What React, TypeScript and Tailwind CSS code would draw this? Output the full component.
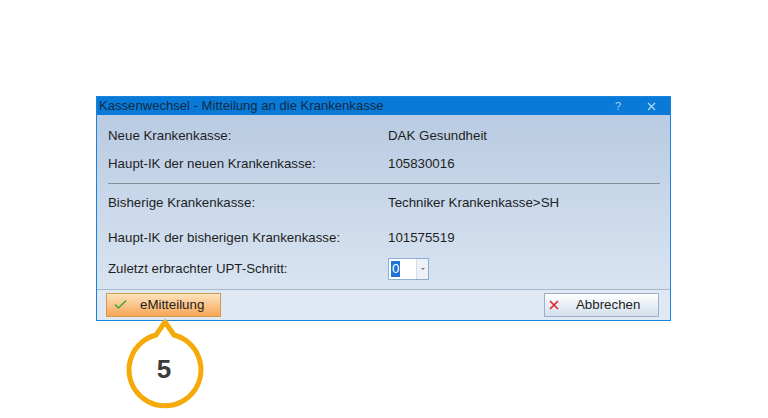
import React from "react"

function Row({ label, value, className = "" }: { label: string; value: React.ReactNode; className?: string }) {
  return (
    <div className={`flex items-center h-[28px] ${className}`}>
      <div className="w-[280px] shrink-0">{label}</div>
      <div>{value}</div>
    </div>
  )
}

function Callout() {
  return (
    <svg className="absolute left-[118px] top-[312px]" width="92" height="100" viewBox="0 0 92 100">
      <path
        d="M 38 23 A 36 36 0 1 0 56 23 L 47 10 Z"
        fill="white"
        stroke="#f5aa0a"
        strokeWidth="5"
        strokeLinejoin="round"
      />
    </svg>
  )
}

export default function App() {
  return (
    <div
      className="relative w-[768px] h-[418px] bg-white overflow-hidden text-[13.3px] text-[#1e1e1e]"
      style={{ fontFamily: '"Liberation Sans", Arial, sans-serif' }}
    >
      <div className="ml-[96px] mt-[96px] w-[575px] border border-[#1a84dc] bg-[#1a84dc]">
        <div className="h-[18px] flex items-center justify-between bg-[#0a7ad8] pl-[2px] pr-[14px]">
          <span className="text-[#0f2a44] text-[13.1px]">Kassenwechsel - Mitteilung an die Krankenkasse</span>
          <div className="flex items-center gap-[26px] text-[#9fd0f7] text-[11px]">
            <span>?</span>
            <svg width="9" height="9" viewBox="0 0 9 9">
              <path d="M1 1 L8 8 M8 1 L1 8" stroke="#b6dcfa" strokeWidth="1.2" />
            </svg>
          </div>
        </div>
        <div className="bg-gradient-to-b from-[#b9cbe2] to-[#d9e4f1] pl-[11px] pr-[11px] pt-[7px] pb-[6px]">
          <Row label="Neue Krankenkasse:" value="DAK Gesundheit" />
          <Row label="Haupt-IK der neuen Krankenkasse:" value="105830016" />
          <div className="pt-[5px] pb-[4px]">
            <div className="h-[2px] bg-[#858f9b] border-b border-[#c9d5e3] mr-[-1px]"></div>
          </div>
          <Row label="Bisherige Krankenkasse:" value="Techniker Krankenkasse>SH" />
          <Row label="Haupt-IK der bisherigen Krankenkasse:" value="101575519" className="mt-[7px]" />
          <Row
            label="Zuletzt erbrachter UPT-Schritt:"
            value={
              <div className="flex h-[22px] w-[41px] border border-[#8eaed4] bg-white">
                <div className="flex-1 flex items-center pl-[2px]">
                  <span className="bg-[#1f72d6] text-white leading-[16px] px-[1px]">0</span>
                </div>
                <div className="w-[12px] bg-[#eef2f7] border-l border-[#d5dee9] flex items-center justify-center">
                  <span className="block w-0 h-0 border-l-[2px] border-r-[2px] border-t-[2px] border-l-transparent border-r-transparent border-t-[#6b7b8c]"></span>
                </div>
              </div>
            }
            className="mt-[3px]"
          />
        </div>
        <div className="flex items-center justify-between h-[31px] bg-[#dfe8f3] border-t border-[#a8b8cb] pl-[9px] pr-[11px] pb-[1px]">
          <button className="flex items-center h-[24px] w-[115px] border border-[#cf9a52] bg-gradient-to-b from-[#fde3bd] to-[#f6a552] pl-[7px] text-[13.3px] text-[#1e1e1e]">
            <svg width="13" height="11" viewBox="0 0 13 11">
              <path d="M1 5.5 L4.5 9 L12 1.5" fill="none" stroke="#3aa83a" strokeWidth="1.5" />
            </svg>
            <span className="ml-[13px]">eMitteilung</span>
          </button>
          <button className="flex items-center h-[24px] w-[115px] border border-[#9fb1c6] bg-gradient-to-b from-[#ffffff] to-[#d3dfec] pl-[4px] text-[13.3px] text-[#1e1e1e]">
            <svg width="10" height="10" viewBox="0 0 10 10">
              <path d="M1 1 L9 9 M9 1 L1 9" stroke="#e0262b" strokeWidth="1.7" />
            </svg>
            <span className="ml-[17px]">Abbrechen</span>
          </button>
        </div>
      </div>
      <Callout />
      <div className="absolute left-[118px] top-[349px] w-[92px] text-center text-[26px] font-bold text-[#3c3c3c] leading-[40px]">
        5
      </div>
    </div>
  )
}
